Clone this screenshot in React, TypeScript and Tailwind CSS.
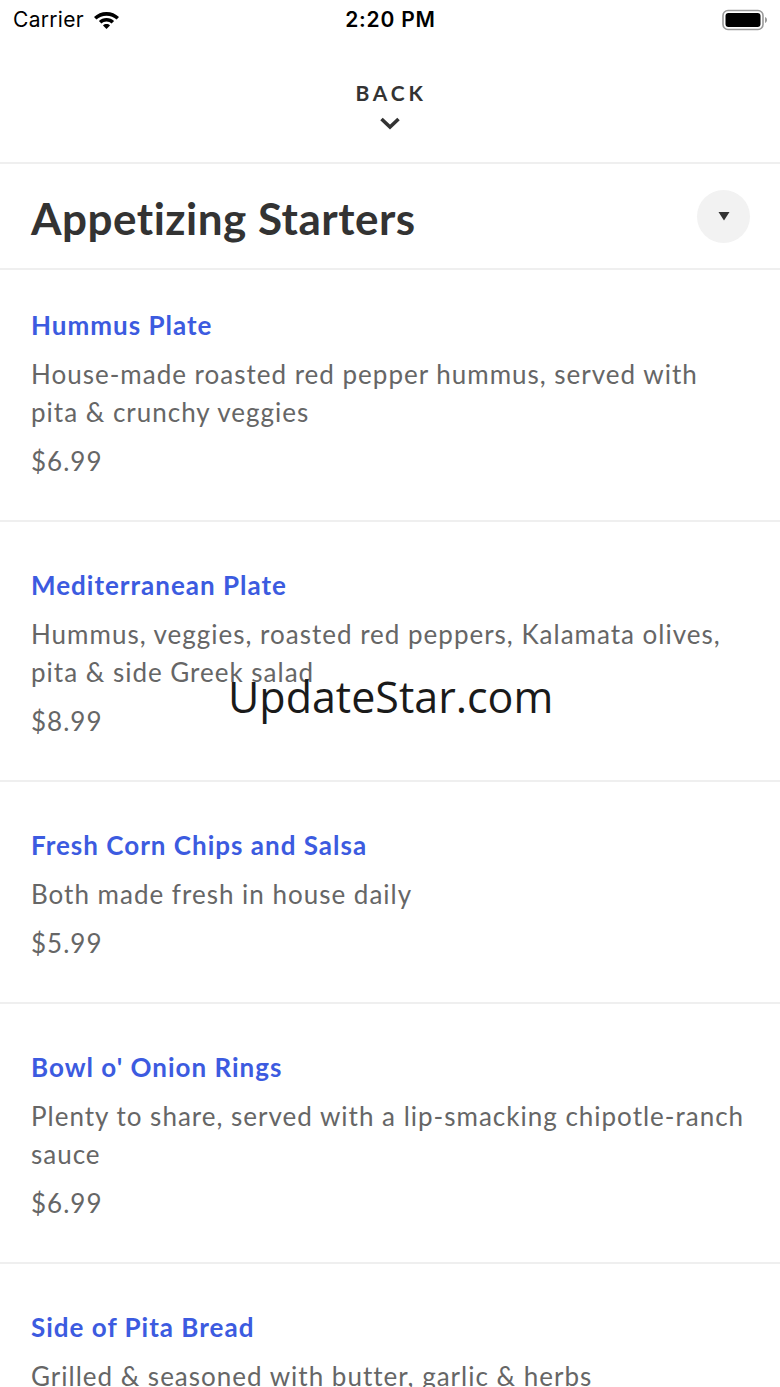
const items = [
  {
    name: "Hummus Plate",
    description: "House-made roasted red pepper hummus, served with pita & crunchy veggies",
    price: "$6.99",
  },
  {
    name: "Mediterranean Plate",
    description: "Hummus, veggies, roasted red peppers, Kalamata olives, pita & side Greek salad",
    price: "$8.99",
  },
  {
    name: "Fresh Corn Chips and Salsa",
    description: "Both made fresh in house daily",
    price: "$5.99",
  },
  {
    name: "Bowl o' Onion Rings",
    description: "Plenty to share, served with a lip-smacking chipotle-ranch sauce",
    price: "$6.99",
  },
  {
    name: "Side of Pita Bread",
    description: "Grilled & seasoned with butter, garlic & herbs",
    price: "$3.99",
  },
];

const StatusBar = () => (
  <div className="grid h-[40px] grid-cols-3 items-center pl-[13px] pr-[12px] font-['Inter',sans-serif] text-[21px] text-black">
    <div className="flex items-center gap-[9px]">
      <span className="tracking-[0.3px]">Carrier</span>
      <svg width="27" height="20" viewBox="0 0 27 20">
        <path d="M13.5 2C8.6 2 4.3 3.9 1 7l2.4 2.6c2.6-2.4 6.2-3.9 10.1-3.9s7.5 1.5 10.1 3.9L26 7c-3.3-3.1-7.6-5-12.5-5z" fill="#000" />
        <path d="M13.5 8c-3 0-5.7 1.2-7.6 3l2.5 2.6c1.3-1.2 3.1-2 5.1-2s3.8.8 5.1 2l2.5-2.6c-1.9-1.8-4.6-3-7.6-3z" fill="#000" />
        <path d="M13.5 14c-1.4 0-2.6.5-3.5 1.4l3.5 3.6 3.5-3.6c-.9-.9-2.1-1.4-3.5-1.4z" fill="#000" />
      </svg>
    </div>
    <div className="text-center font-semibold tracking-[0.8px]">2:20 PM</div>
    <div className="flex justify-end">
      <svg width="46" height="22" viewBox="0 0 46 22">
        <rect x="1" y="1.5" width="40" height="19" rx="5" fill="none" stroke="#9a9a9a" strokeWidth="1.6" />
        <rect x="3.5" y="4" width="35" height="14" rx="3" fill="#000" />
        <path d="M43 8v6c1.2-.4 2-1.6 2-3s-.8-2.6-2-3z" fill="#9a9a9a" />
      </svg>
    </div>
  </div>
);

const Header = () => (
  <div className="flex h-[124px] flex-col items-center border-b-2 border-[#efefef] pt-[41px]">
    <span className="pl-[2px] font-['Lato',sans-serif] text-[21px] font-bold leading-[24px] tracking-[3.8px] text-[#333]">
      BACK
    </span>
    <svg className="mt-[11px]" width="22" height="14" viewBox="0 0 22 14">
      <polyline points="2.5,3 11,11 19.5,3" fill="none" stroke="#333" strokeWidth="3.6" />
    </svg>
  </div>
);

const SectionTitle = () => (
  <div className="flex h-[106px] items-center justify-between border-b-2 border-[#efefef] pl-[31px] pr-[30px]">
    <h1 className="pt-[4px] font-['Lato',sans-serif] text-[44px] font-bold leading-[52px] tracking-[0.5px] text-[#333]">
      Appetizing Starters
    </h1>
    <button className="flex h-[53px] w-[53px] items-center justify-center rounded-full bg-[#f2f2f2]">
      <svg width="12" height="10" viewBox="0 0 12 10">
        <polygon points="0.5,1 11.5,1 6,9.5" fill="#333" />
      </svg>
    </button>
  </div>
);

export default function App() {
  return (
    <div className="relative h-[1387px] w-[780px] overflow-hidden bg-white">
      <StatusBar />
      <Header />
      <SectionTitle />
      <div className="flex flex-col font-['Lato',sans-serif]">
        {items.map((item, index) => (
          <div
            key={index}
            className={`border-b-2 border-[#efefef] px-[31px] pb-[40px] ${index === 0 ? "pt-[38px]" : "pt-[46px]"}`}
          >
            <h2 className="text-[26px] font-bold leading-[34px] tracking-[1px] text-[#3c5be0]">{item.name}</h2>
            <p className="mt-[13px] text-[26px] leading-[38px] tracking-[1px] text-[#666]">{item.description}</p>
            <p className="mt-[11px] text-[26px] leading-[38px] tracking-[1px] text-[#666]">{item.price}</p>
          </div>
        ))}
      </div>
      <div className="pointer-events-none absolute left-[228px] top-[668px] font-['Open_Sans',sans-serif] text-[43px] leading-[58px] text-[#1a1a1a]">
        UpdateStar.com
      </div>
    </div>
  );
}
